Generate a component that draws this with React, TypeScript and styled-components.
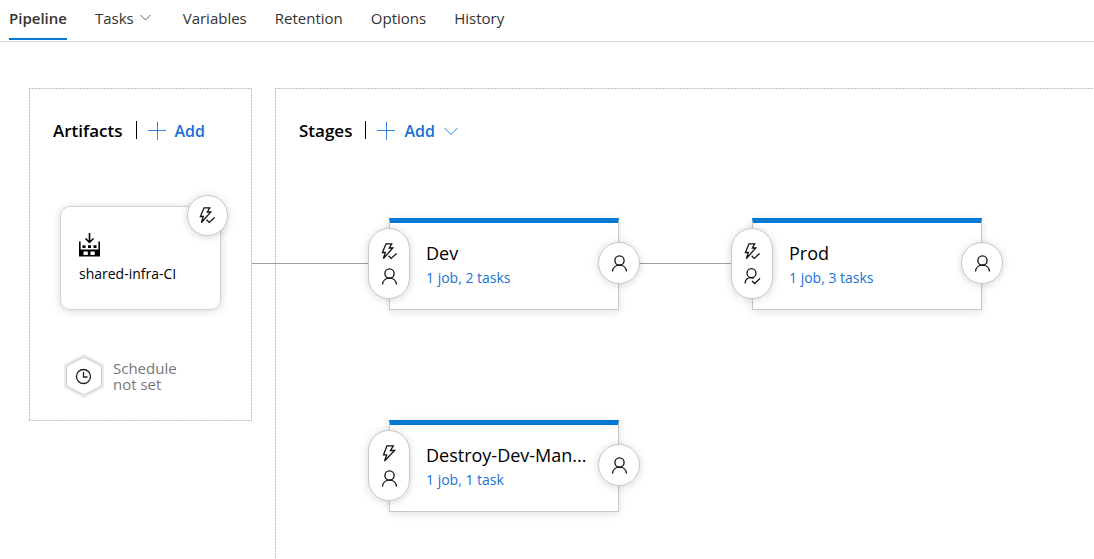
import React from 'react';
import styled, { createGlobalStyle } from 'styled-components';

const GlobalStyle = createGlobalStyle`
  *, *::before, *::after { box-sizing: border-box; }
  body {
    margin: 0;
    background: #fff;
    color: #000;
    font-family: "Open Sans", "Noto Sans", sans-serif;
    font-size: 14px;
    overflow-x: hidden;
  }
  button { font: inherit; color: inherit; background: none; border: 0; padding: 0; cursor: pointer; }
  a { text-decoration: none; }
  h2, h3 { margin: 0; }
  svg { display: block; flex: none; }
`;

const Page = styled.div`
  display: flex;
  flex-direction: column;
  min-height: 100vh;
`;

const TabBar = styled.nav`
  display: flex;
  gap: 28px;
  height: 42px;
  padding: 0 9px;
  border-bottom: 1px solid #d6d6d6;
`;

const Tab = styled.a<{ $active?: boolean; $menu?: boolean }>`
  display: flex;
  align-items: center;
  gap: 6px;
  height: 40px;
  padding: 0 ${(p) => (p.$menu ? 4 : 0)}px 2px 0;
  border-bottom: 2px solid ${(p) => (p.$active ? '#0078d4' : 'transparent')};
  color: #333;
  font-size: 15px;
  font-weight: ${(p) => (p.$active ? 600 : 400)};
  white-space: nowrap;
`;

const Canvas = styled.main`
  display: flex;
  flex: 1;
  align-items: flex-start;
  gap: 23px;
  padding: 46px 0 0 29px;
`;

const dashX = 'repeating-linear-gradient(90deg, #c4c4c4 0 2px, #f0f0f0 2px 3px)';
const dashY = 'repeating-linear-gradient(180deg, #c4c4c4 0 2px, #f0f0f0 2px 3px)';

const Panel = styled.section`
  padding: 31px 24px 23px;
`;

const ArtifactsPanel = styled(Panel)`
  flex: none;
  width: 223px;
  background:
    ${dashX} top / 100% 1px no-repeat,
    ${dashX} bottom / 100% 1px no-repeat,
    ${dashY} left / 1px 100% no-repeat,
    ${dashY} right / 1px 100% no-repeat;
`;

const StagesPanel = styled(Panel)`
  flex: 1;
  align-self: stretch;
  min-width: 0;
  background:
    ${dashX} top / 100% 1px no-repeat,
    ${dashY} left / 1px 100% no-repeat;
`;

const PanelHeader = styled.header`
  display: flex;
  align-items: center;
  height: 24px;
`;

const PanelTitle = styled.h2`
  font-size: 17px;
  line-height: 24px;
  font-weight: 600;
  padding-right: 13px;
`;

const Divider = styled.span`
  width: 1px;
  height: 18px;
  margin: 0 11px 2px 0;
  background: #000;
`;

const AddButton = styled.button`
  display: flex;
  align-items: center;
  gap: 9px;
  color: #1872d3;
  font-size: 16px;
  font-weight: 600;
  line-height: 24px;
`;

const Badge = styled.button`
  position: absolute;
  display: flex;
  flex-direction: column;
  align-items: center;
  justify-content: center;
  gap: 8px;
  width: 42px;
  height: 42px;
  background: #fff;
  border: 1px solid #c8c8c8;
  border-radius: 21px;
  box-shadow: 0 1px 8px rgba(0, 0, 0, 0.16);
`;

const ArtifactBadge = styled(Badge)`
  top: -12px;
  right: -8px;
  width: 41px;
  height: 41px;
`;

const PreBadge = styled(Badge)`
  left: -22px;
  top: 5px;
  height: 71px;
`;

const PostBadge = styled(Badge)`
  right: -22px;
  top: 19px;
`;

const ArtifactCard = styled.article`
  position: relative;
  width: 161px;
  height: 104px;
  margin: 63px 0 0 7px;
  padding: 26px 18px;
  background: #fff;
  border: 1px solid #d4d4d4;
  border-radius: 10px;
  box-shadow: 0 1px 8px rgba(0, 0, 0, 0.16);
`;

const ArtifactName = styled.h3`
  margin-top: 7px;
  font-size: 14px;
  line-height: 20px;
  font-weight: 400;
  white-space: nowrap;
`;

const Schedule = styled.button`
  display: flex;
  align-items: center;
  gap: 9px;
  margin: 44px 0 0 11px;
  color: #777;
  font-size: 15px;
  line-height: 16px;
  text-align: left;
`;

const ScheduleText = styled.span`
  width: 72px;
`;

const StageRows = styled.div`
  display: flex;
  flex-direction: column;
  gap: 110px;
  padding: 75px 0 0 90px;
`;

const StageRow = styled.div`
  position: relative;
  display: flex;
  align-items: center;
`;

const Connector = styled.span`
  flex: none;
  width: 133px;
  height: 1px;
  margin-bottom: 2px;
  background: #a0a0a0;
`;

const SourceConnector = styled(Connector)`
  position: absolute;
  right: 100%;
  width: 137px;
`;

const StageCard = styled.article`
  position: relative;
  flex: none;
  width: 230px;
  height: 92px;
  padding: 18px 30px 0 36px;
  background: #fff;
  border: 1px solid #c8c8c8;
  border-top: 5px solid #0078d4;
  box-shadow: 0 2px 8px rgba(0, 0, 0, 0.12);
`;

const StageName = styled.h3`
  font-size: 18px;
  line-height: 24px;
  font-weight: 400;
  white-space: nowrap;
`;

const StageLink = styled.a`
  display: block;
  color: #1872d3;
  font-size: 14px;
  line-height: 26px;
`;

const Stroke = styled.svg`
  fill: none;
  stroke: currentColor;
`;

const Chevron = ({ width = 11, color = '#666' }: { width?: number; color?: string }) => (
  <Stroke width={width} height="8" viewBox={`0 0 ${width} 8`} color={color}>
    <path d={`M.5 1 L${width / 2} ${width / 2 + 0.5} L${width - 0.5} 1`} />
  </Stroke>
);

const Plus = () => (
  <Stroke width="18" height="18" viewBox="0 0 18 18" color="#2f86dc">
    <path d="M9.500 0V18M0 8.500H18" />
  </Stroke>
);

const Bolt = ({ checked }: { checked?: boolean }) => (
  <Stroke width="17" height="17" viewBox="0 0 17 17" color="#111" strokeWidth="1.3">
    {checked ? (
      <>
        <path d="M5 .8H10.700L8.300 5H11.800L2.400 15.500L4.300 9.500H1.400Z" />
        <path d="M7.600 12.800L10.200 15.400L15.600 10.400" stroke="#fff" strokeWidth="3.500" />
        <path d="M7.600 12.800L10.200 15.400L15.600 10.400" />
      </>
    ) : (
      <path d="M6 .8H12.300L9.500 5.500H13.600L3.500 16L5.700 9.900H2.500Z" />
    )}
  </Stroke>
);

const Person = ({ checked }: { checked?: boolean }) => (
  <Stroke width="17" height="17" viewBox="0 0 17 17" color="#111" strokeWidth="1.3">
    {checked ? (
      <>
        <circle cx="7.500" cy="5.200" r="4.500" />
        <path d="M1 15.500C1.300 12 3.600 9.700 7 9.700C7.900 9.700 8.700 9.900 9.500 10.300" />
        <path d="M8 13L10.600 15.500L16 10.500" />
      </>
    ) : (
      <>
        <circle cx="8.500" cy="5.500" r="4.600" />
        <path d="M1.500 16.500C1.700 12.700 4.600 10.100 8.500 10.100S15.300 12.700 15.500 16.500" />
      </>
    )}
  </Stroke>
);

const BuildIcon = () => (
  <svg width="21" height="24" viewBox="0 0 21 24">
    <path d="M10.500 0V9M6.500 5.500L10.500 9.300L14.500 5.500" fill="none" stroke="#000" strokeWidth="1.600" />
    <path
      fill="#000"
      fillRule="evenodd"
      d="M0 8.500H1.600V16.500H19.400V8.500H21V23.500H0ZM4.500 18.500V22H8.800V18.500ZM11.500 18.500V22H15.800V18.500Z"
    />
    <path d="M3.500 12.300H6.500V15H3.500ZM9 12.300H12V15H9ZM14.500 12.300H17.500V15H14.500Z" fill="#000" />
  </svg>
);

const ScheduleIcon = () => (
  <svg width="40" height="44" viewBox="0 0 40 44">
    <path d="M20 1.500L38.500 11.500V32.500L20 42.500L1.500 32.500V11.500Z" fill="#fff" stroke="#e9e9e9" strokeWidth="3" />
    <path d="M20 3L37.500 12.500V31.500L20 41L2.500 31.500V12.500Z" fill="#fff" stroke="#cecece" />
    <g fill="none" stroke="#222" strokeWidth="1.300">
      <circle cx="19.500" cy="22.500" r="7" />
      <path d="M19.500 18V23H23.500" />
    </g>
  </svg>
);

interface StageProps {
  name: string;
  summary: string;
  trigger?: boolean;
  approved?: boolean;
}

const Stage = ({ name, summary, trigger, approved }: StageProps) => (
  <StageCard>
    <StageName>{name}</StageName>
    <StageLink href="#tasks">{summary}</StageLink>
    <PreBadge aria-label={`${name} pre-deployment conditions`}>
      <Bolt checked={trigger} />
      <Person checked={approved} />
    </PreBadge>
    <PostBadge aria-label={`${name} post-deployment conditions`}>
      <Person />
    </PostBadge>
  </StageCard>
);

export default function App() {
  return (
    <Page>
      <GlobalStyle />
      <TabBar>
        <Tab href="#pipeline" $active aria-current="page">Pipeline</Tab>
        <Tab href="#tasks" $menu>Tasks <Chevron /></Tab>
        <Tab href="#variables">Variables</Tab>
        <Tab href="#retention">Retention</Tab>
        <Tab href="#options">Options</Tab>
        <Tab href="#history">History</Tab>
      </TabBar>
      <Canvas>
        <ArtifactsPanel>
          <PanelHeader>
            <PanelTitle>Artifacts</PanelTitle>
            <Divider />
            <AddButton><Plus />Add</AddButton>
          </PanelHeader>
          <ArtifactCard>
            <BuildIcon />
            <ArtifactName>shared-infra-CI</ArtifactName>
            <ArtifactBadge aria-label="Continuous deployment trigger">
              <Bolt checked />
            </ArtifactBadge>
          </ArtifactCard>
          <Schedule>
            <ScheduleIcon />
            <ScheduleText>Schedule not set</ScheduleText>
          </Schedule>
        </ArtifactsPanel>
        <StagesPanel>
          <PanelHeader>
            <PanelTitle>Stages</PanelTitle>
            <Divider />
            <AddButton><Plus />Add<Chevron width={14} color="#2f86dc" /></AddButton>
          </PanelHeader>
          <StageRows>
            <StageRow>
              <SourceConnector />
              <Stage name="Dev" summary="1 job, 2 tasks" trigger />
              <Connector />
              <Stage name="Prod" summary="1 job, 3 tasks" trigger approved />
            </StageRow>
            <StageRow>
              <Stage name="Destroy-Dev-Man..." summary="1 job, 1 task" />
            </StageRow>
          </StageRows>
        </StagesPanel>
      </Canvas>
    </Page>
  );
}
